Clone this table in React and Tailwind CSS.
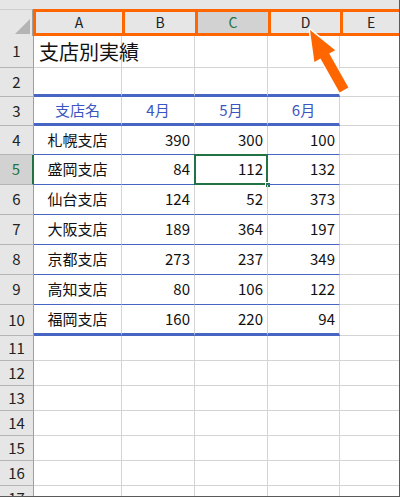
import React from "react";

const rows = [
  ["札幌支店", 390, 300, 100],
  ["盛岡支店", 84, 112, 132],
  ["仙台支店", 124, 52, 373],
  ["大阪支店", 189, 364, 197],
  ["京都支店", 273, 237, 349],
  ["高知支店", 80, 106, 122],
  ["福岡支店", 160, 220, 94],
];

const colW = ["w-[88px]", "w-[73px]", "w-[73px]", "w-[72px]"];

function RowHead({ n, active }) {
  return (
    <div
      className={
        "w-[34px] shrink-0 flex items-center justify-center border-b border-[#b4b4b4] text-[15px] " +
        (active
          ? "bg-[#d2d2d2] text-[#217346] border-r-2 border-r-[#217346]"
          : "bg-[#e6e6e6] text-[#222] border-r border-r-[#9e9e9e]")
      }
    >
      {n}
    </div>
  );
}

function Row({ n, h, active, bottom = "grid", children }) {
  // bottom: grid | thin | thick -> border under columns A-D
  const b =
    bottom === "thick"
      ? "border-b-[3px] border-b-[#4766c4]"
      : bottom === "thin"
      ? "border-b border-b-[#4766c4]"
      : "border-b border-b-[#d4d4d4]";
  const cells = children || [null, null, null, null];
  return (
    <div className={"flex " + h}>
      <RowHead n={n} active={active} />
      {cells.map((c, i) => (
        <div
          key={i}
          className={"relative shrink-0 border-r border-r-[#d4d4d4] " + colW[i] + " " + b}
        >
          {c}
        </div>
      ))}
      <div className="flex-1 border-b border-[#d4d4d4]" />
    </div>
  );
}

const num = (v) => (
  <div className="h-full flex items-center justify-end pr-[4px] text-[15px] text-[#111]">{v}</div>
);
const mid = (v, cls = "text-[#111]") => (
  <div className={"h-full flex items-center justify-center text-[15px] " + cls}>{v}</div>
);

export default function App() {
  return (
    <div
      className="relative w-[400px] h-[497px] overflow-hidden bg-white border-r border-b border-[#5a5a5a]"
      style={{ fontFamily: '"Noto Sans CJK JP", "Noto Sans", sans-serif' }}
    >
      {/* top strip */}
      <div className="h-[9px] bg-[#e6e6e6]" />

      {/* column headers */}
      <div className="flex h-[27px] bg-[#e6e6e6]">
        <div className="relative w-[33px] shrink-0 border-r border-[#9e9e9e] border-t border-t-[#cfcfcf]">
          <svg className="absolute inset-0" width="33" height="27">
            <polygon points="15,24 30,24 30,9" fill="#b4b4b4" />
          </svg>
        </div>
        <div className="w-[92px] shrink-0 border-[3px] border-[#ff6600] flex items-center justify-center text-[14px] text-[#222]">
          A
        </div>
        <div className="w-[73px] shrink-0 border-y-[3px] border-r-[3px] border-[#ff6600] flex items-center justify-center text-[14px] text-[#222]">
          B
        </div>
        <div className="w-[73px] shrink-0 border-y-[3px] border-r-[3px] border-[#ff6600] bg-[#d2d2d2] flex items-center justify-center text-[14px] text-[#217346]">
          C
        </div>
        <div className="w-[72px] shrink-0 border-y-[3px] border-r-[3px] border-[#ff6600] flex items-center justify-center text-[14px] text-[#222]">
          D
        </div>
        <div className="flex-1 border-y-[3px] border-[#ff6600] flex items-center justify-center text-[14px] text-[#222]">
          E
        </div>
      </div>

      {/* row 1 */}
      <div className="flex h-[32px]">
        <RowHead n={1} />
        <div className="relative w-[88px] shrink-0 border-r border-b border-[#d4d4d4]">
          <span className="absolute left-[5px] top-[1px] whitespace-nowrap text-[20px] text-[#111]">
            支店別実績
          </span>
        </div>
        <div className="w-[73px] shrink-0 border-r border-b border-[#d4d4d4]" />
        <div className="w-[73px] shrink-0 border-r border-b border-[#d4d4d4]" />
        <div className="w-[72px] shrink-0 border-r border-b border-[#d4d4d4]" />
        <div className="flex-1 border-b border-[#d4d4d4]" />
      </div>

      <Row n={2} h="h-[29px]" bottom="thick" />
      <Row n={3} h="h-[29px]" bottom="thick">
        {[
          mid("支店名", "text-[#3b55c2]"),
          mid("4月", "text-[#3b55c2]"),
          mid("5月", "text-[#3b55c2]"),
          mid("6月", "text-[#3b55c2]"),
        ]}
      </Row>

      {rows.map((r, i) => (
        <Row
          key={r[0]}
          n={i + 4}
          h={i === 0 ? "h-[29px]" : i === 6 ? "h-[31px]" : "h-[30px]"}
          active={i === 1}
          bottom={i === 6 ? "thick" : "thin"}
        >
          {[
            mid(r[0]),
            num(r[1]),
            i === 1 ? (
              <>
                {num(r[2])}
                <div className="absolute -left-[1px] -top-[1px] -right-[1px] -bottom-[1px] border-2 border-[#217346]" />
                <div className="absolute -right-[4px] -bottom-[4px] w-[6px] h-[6px] bg-[#217346] border border-white" />
              </>
            ) : (
              num(r[2])
            ),
            num(r[3]),
          ]}
        </Row>
      ))}

      {[11, 12, 13, 14, 15, 16, 17].map((n) => (
        <Row key={n} n={n} h="h-[25px]" />
      ))}

      {/* arrow */}
      <svg className="absolute left-0 top-0 pointer-events-none" width="400" height="497">
        <polygon
          points="310,30 335.2,50.2 329.2,53.6 348.4,87.5 339.6,92.5 320.5,58.6 314.4,62"
          fill="#ff6600"
          stroke="#ffffff"
          strokeWidth="3"
          strokeLinejoin="round"
          paintOrder="stroke"
        />
      </svg>
    </div>
  );
}
